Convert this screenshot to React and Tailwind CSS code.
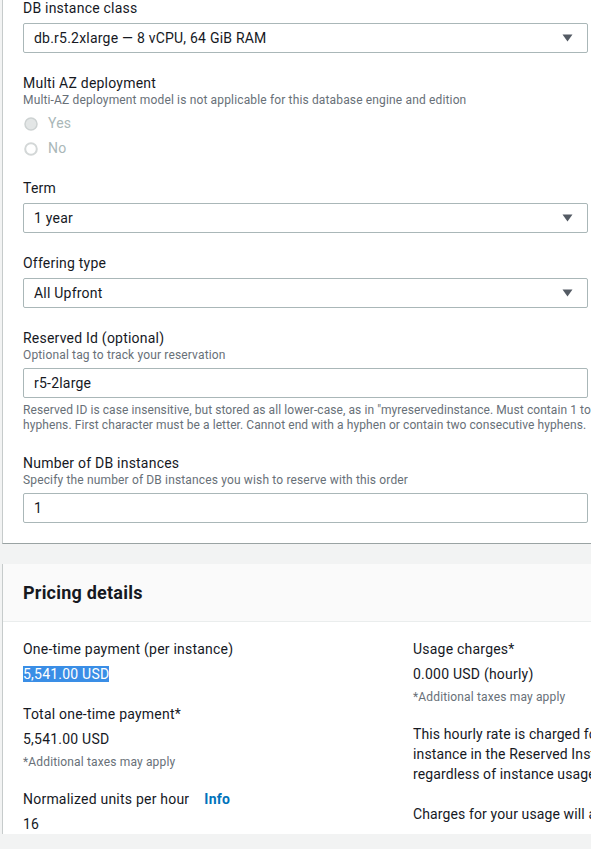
import React from "react";

const font = { fontFamily: "Roboto, 'Noto Sans', sans-serif" };

function Caret() {
  return (
    <svg width="11" height="8" viewBox="0 0 11 8" className="shrink-0">
      <path d="M0.5 0.5 L10.5 0.5 L5.5 7.5 Z" fill="#545b64" />
    </svg>
  );
}

function Select({ value }) {
  return (
    <div className="mt-[5px] flex h-[30px] w-[565px] items-center justify-between rounded-[2px] border border-[#aab7b8] bg-white pl-[10px] pr-[14px] text-[14px] text-[#16191f]">
      <span>{value}</span>
      <Caret />
    </div>
  );
}

function Input({ value }) {
  return (
    <div className="mt-[5px] flex h-[30px] w-[565px] items-center rounded-[2px] border border-[#aab7b8] bg-white pl-[10px] text-[14px] text-[#16191f]">
      {value}
    </div>
  );
}

function Radio({ checked, label }) {
  return (
    <div className="flex h-[25px] items-center gap-[10px] pl-[1px] text-[14px] text-[#aab7b8]">
      <svg width="14" height="14" viewBox="0 0 14 14">
        {checked ? (
          <circle cx="7" cy="7" r="6" fill="#e3e6e6" stroke="#cdd2d2" strokeWidth="1.5" />
        ) : (
          <circle cx="7" cy="7" r="5.8" fill="white" stroke="#d3d7d7" strokeWidth="2" />
        )}
      </svg>
      <span>{label}</span>
    </div>
  );
}

export default function App() {
  return (
    <div style={font} className="w-[591px] h-[849px] overflow-hidden bg-[#f2f3f3] tracking-[0.22px] text-[#16191f]">
      <div className="w-[900px] pl-[2px]">
        {/* Panel 1 */}
        <div className="border-l border-b border-l-[#c6cbcb] border-b-[#9aa3a3] bg-white pl-[20px] pb-[20px] pt-0">
          <div className="mt-[-2px] text-[14px] leading-[20px]">DB instance class</div>
          <Select value="db.r5.2xlarge — 8 vCPU, 64 GiB RAM" />

          <div className="mt-[21px] text-[14px] leading-[18px]">Multi AZ deployment</div>
          <div className="text-[12px] leading-[16px] tracking-[0.15px] text-[#687078]">
            Multi-AZ deployment model is not applicable for this database engine and edition
          </div>
          <div className="mt-[3px]">
            <Radio checked label="Yes" />
            <Radio label="No" />
          </div>

          <div className="mt-[17px] text-[14px] leading-[20px]">Term</div>
          <Select value="1 year" />

          <div className="mt-[20px] text-[14px] leading-[20px]">Offering type</div>
          <Select value="All Upfront" />

          <div className="mt-[21px] text-[14px] leading-[18px]">Reserved Id (optional)</div>
          <div className="text-[12px] leading-[16px] tracking-[0.15px] text-[#687078]">Optional tag to track your reservation</div>
          <Input value="r5-2large" />
          <div className="mt-[5px] whitespace-nowrap text-[12px] leading-[15px] tracking-[0.08px] text-[#687078]">
            <div>
              Reserved ID is case insensitive, but stored as all lower-case, as in "myreservedinstance. Must contain 1 to 60 alphanumeric characters or
            </div>
            <div>hyphens. First character must be a letter. Cannot end with a hyphen or contain two consecutive hyphens.</div>
          </div>

          <div className="mt-[21px] text-[14px] leading-[18px]">Number of DB instances</div>
          <div className="text-[12px] leading-[16px] tracking-[0.15px] text-[#687078]">
            Specify the number of DB instances you wish to reserve with this order
          </div>
          <Input value="1" />
        </div>

        {/* Panel 2 */}
        <div className="mt-[20px] border-l border-l-[#c6cbcb] bg-white">
          <div className="flex h-[58px] items-center border-b border-[#eaeded] bg-[#fafafa] pl-[20px]">
            <h2 className="text-[18px] font-bold leading-[24px] text-[#16191f]">Pricing details</h2>
          </div>
          <div className="grid grid-cols-[390px_390px] pl-[20px] pt-[17px] text-[14px]">
            <div>
              <div className="leading-[20px]">One-time payment (per instance)</div>
              <div className="mt-[5px] leading-[20px]">
                <span className="bg-[#3a8ee6] text-white">5,541.00 USD</span>
              </div>
              <div className="mt-[20px] leading-[20px]">Total one-time payment*</div>
              <div className="mt-[5px] leading-[20px]">5,541.00 USD</div>
              <div className="mt-[5px] text-[12px] leading-[16px] tracking-[0.15px] text-[#687078]">*Additional taxes may apply</div>
              <div className="mt-[19px] flex leading-[20px]">
                <span>Normalized units per hour</span>
                <span className="ml-[15px] font-bold text-[#0073bb]">Info</span>
              </div>
              <div className="mt-[5px] leading-[20px]">16</div>
            </div>
            <div>
              <div className="leading-[20px]">Usage charges*</div>
              <div className="mt-[5px] leading-[20px]">0.000 USD (hourly)</div>
              <div className="mt-[5px] text-[12px] leading-[16px] tracking-[0.15px] text-[#687078]">*Additional taxes may apply</div>
              <div className="mt-[19px] whitespace-nowrap leading-[20px] tracking-[0.12px]">
                <div>This hourly rate is charged for every hour</div>
                <div>instance in the Reserved Instance term,</div>
                <div>regardless of instance usage.</div>
              </div>
              <div className="mt-[20px] whitespace-nowrap leading-[20px] tracking-[0.12px]">Charges for your usage will apply</div>
            </div>
          </div>
        </div>
      </div>
    </div>
  );
}
